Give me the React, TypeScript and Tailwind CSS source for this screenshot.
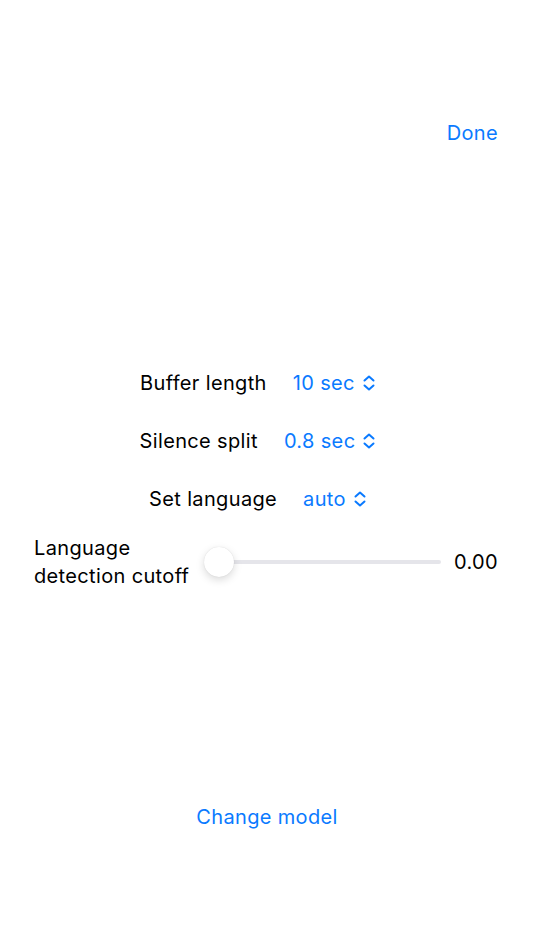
function Chevron() {
  return (
    <svg width="14" height="16" viewBox="0 0 14 16" fill="none" className="ml-[7px]">
      <path d="M2.5 5.5 L7 1.5 L11.5 5.5 M2.5 10.5 L7 14.5 L11.5 10.5" stroke="#0a7aff" strokeWidth="2" strokeLinecap="round" strokeLinejoin="round" />
    </svg>
  )
}

function PickerRow({ label, value }: { label: string; value: string }) {
  return (
    <div className="flex items-center justify-center h-[58px] pr-[18px]">
      <span className="text-black">{label}</span>
      <span className="ml-[26px] flex items-center text-[#0a7aff]">
        {value}
        <Chevron />
      </span>
    </div>
  )
}

export default function App() {
  return (
    <div className="h-[950px] bg-white flex flex-col text-[20px] font-['Inter','Liberation_Sans',sans-serif] tracking-[0.35px]">
      <div className="h-[115px]" />
      <div className="flex justify-end pr-[36px]">
        <button className="text-[#0a7aff] h-[36px]">Done</button>
      </div>
      <div className="h-[203px]" />
      <PickerRow label="Buffer length" value="10 sec" />
      <PickerRow label="Silence split" value="0.8 sec" />
      <PickerRow label="Set language" value="auto" />
      <div className="flex items-center pl-[34px] pr-[36px] mt-[6px]">
        <div className="leading-[28px] text-black w-[160px]">
          Language<br />detection cutoff
        </div>
        <div className="relative flex-1 ml-[10px] h-[30px] flex items-center">
          <div className="h-[4px] w-full rounded-full bg-[#e5e5ea]" />
          <div className="absolute left-0 top-0 w-[30px] h-[30px] rounded-full bg-white shadow-[0_3px_8px_rgba(0,0,0,0.15),0_0_1px_rgba(0,0,0,0.15)]" />
        </div>
        <span className="ml-[13px] text-black">0.00</span>
      </div>
      <div className="h-[209px]" />
      <div className="flex justify-center">
        <button className="text-[#0a7aff] h-[36px]">Change model</button>
      </div>
    </div>
  )
}
